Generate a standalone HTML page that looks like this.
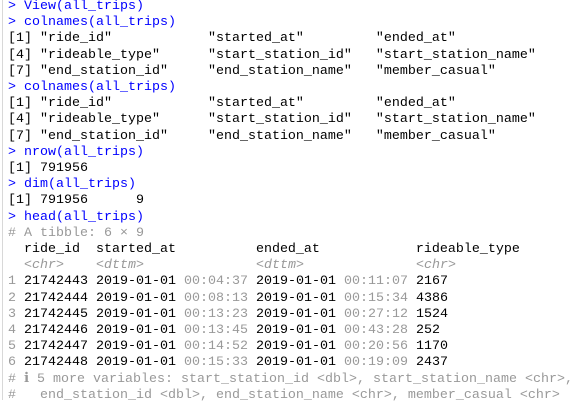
<!DOCTYPE html>
<html><head><meta charset="utf-8"><style>
html,body{margin:0;padding:0;background:#fff;width:582px;height:400px;overflow:hidden}
.b{position:absolute;left:2px;top:0;width:1px;height:400px;background:#d8d8d8}
pre{position:absolute;left:8px;top:-1px;margin:0;font-family:"Liberation Mono",monospace;font-size:13.33px;line-height:16.2px;color:#000}
.c{color:#0000ff}.g{color:#999}.gi{color:#999;font-style:italic}
</style></head><body><div class="b"></div><pre><span class="c">&gt; View(all_trips)
&gt; colnames(all_trips)</span>
[1] "ride_id"            "started_at"         "ended_at"          
[4] "rideable_type"      "start_station_id"   "start_station_name"
[7] "end_station_id"     "end_station_name"   "member_casual"     
<span class="c">&gt; colnames(all_trips)</span>
[1] "ride_id"            "started_at"         "ended_at"          
[4] "rideable_type"      "start_station_id"   "start_station_name"
[7] "end_station_id"     "end_station_name"   "member_casual"     
<span class="c">&gt; nrow(all_trips)</span>
[1] 791956
<span class="c">&gt; dim(all_trips)</span>
[1] 791956      9
<span class="c">&gt; head(all_trips)</span>
<span class="g"># A tibble: 6 × 9</span>
  ride_id  started_at          ended_at            rideable_type
  <span class="gi">&lt;chr&gt;</span>    <span class="gi">&lt;dttm&gt;</span>              <span class="gi">&lt;dttm&gt;</span>              <span class="gi">&lt;chr&gt;</span>
<span class="g">1</span> 21742443 2019-01-01 <span class="g">00:04:37</span> 2019-01-01 <span class="g">00:11:07</span> 2167
<span class="g">2</span> 21742444 2019-01-01 <span class="g">00:08:13</span> 2019-01-01 <span class="g">00:15:34</span> 4386
<span class="g">3</span> 21742445 2019-01-01 <span class="g">00:13:23</span> 2019-01-01 <span class="g">00:27:12</span> 1524
<span class="g">4</span> 21742446 2019-01-01 <span class="g">00:13:45</span> 2019-01-01 <span class="g">00:43:28</span> 252
<span class="g">5</span> 21742447 2019-01-01 <span class="g">00:14:52</span> 2019-01-01 <span class="g">00:20:56</span> 1170
<span class="g">6</span> 21742448 2019-01-01 <span class="g">00:15:33</span> 2019-01-01 <span class="g">00:19:09</span> 2437
<span class="g"># ℹ 5 more variables: start_station_id &lt;dbl&gt;, start_station_name &lt;chr&gt;,
#   end_station_id &lt;dbl&gt;, end_station_name &lt;chr&gt;, member_casual &lt;chr&gt;</span></pre></body></html>
